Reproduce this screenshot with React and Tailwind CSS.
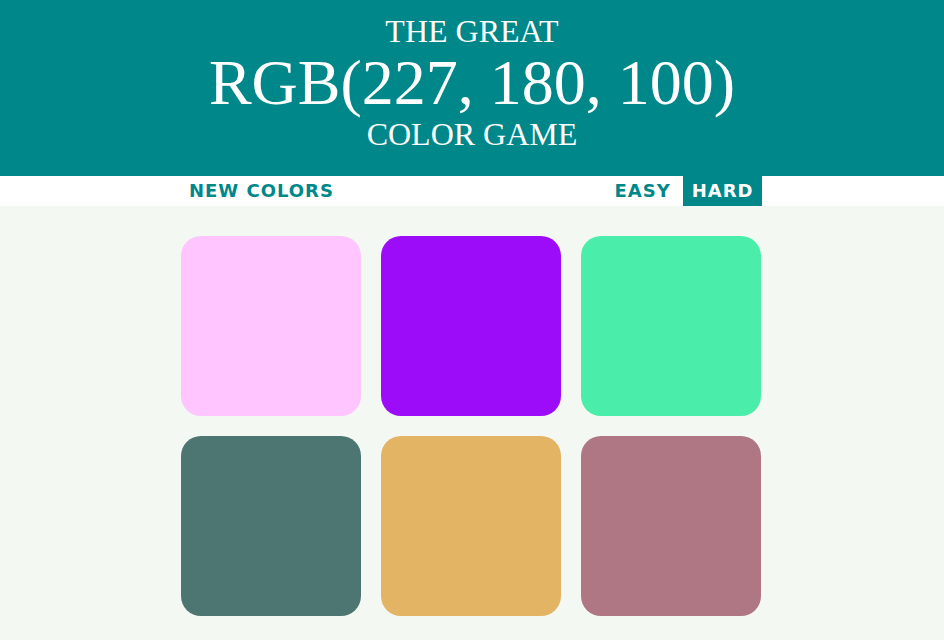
import { useState } from 'react';

const squares = [
  '#fec5fe',
  '#9c0cf8',
  '#4bedaa',
  '#4d7673',
  '#e3b464',
  '#af7684',
];

export default function App() {
  const [mode, setMode] = useState('hard');

  return (
    <div className="min-h-[640px] bg-[#f4f8f3]">
      <header className="h-[176px] bg-[#00878a] text-white text-center font-['Liberation_Serif',serif] pt-[15px]">
        <div className="text-[32px] leading-[32px]">THE GREAT</div>
        <div className="text-[64px] leading-[64px] mt-[4px]">RGB(227, 180, 100)</div>
        <div className="text-[32px] leading-[32px] mt-[3px]">COLOR GAME</div>
      </header>

      <nav className="bg-white h-[30px]">
        <div className="w-[582px] mx-auto pr-[1px] flex items-stretch h-full font-['DejaVu_Sans',sans-serif] text-[18px] font-bold tracking-[1px] text-[#00878a]">
          <button className="px-2 leading-[30px]">NEW COLORS</button>
          <div className="flex-1" />
          <button
            onClick={() => setMode('easy')}
            className={mode === 'easy' ? 'px-[8.5px] leading-[30px] bg-[#00878a] text-white' : 'px-[8.5px] leading-[30px]'}
          >
            EASY
          </button>
          <button
            onClick={() => setMode('hard')}
            className={mode === 'hard' ? 'ml-[4px] px-[8.5px] leading-[30px] bg-[#00878a] text-white' : 'ml-[4px] px-[8.5px] leading-[30px]'}
          >
            HARD
          </button>
        </div>
      </nav>

      <main className="w-[582px] mx-auto pr-[2px] pt-[30px] grid grid-cols-3 gap-5">
        {squares.map((c, i) => (
          <div key={i} className="h-[180px] rounded-[20px]" style={{ background: c }} />
        ))}
      </main>
    </div>
  );
}
